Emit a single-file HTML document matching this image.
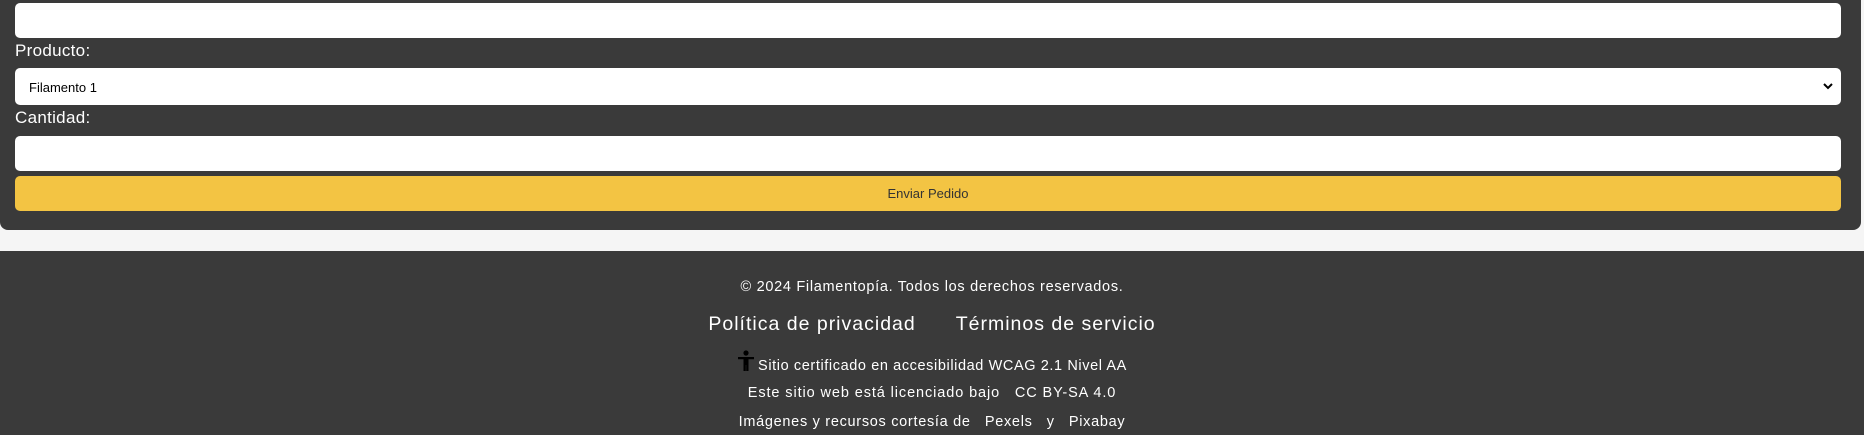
<!DOCTYPE html>
<html><head><meta charset="utf-8"><style>
*{box-sizing:border-box;margin:0;padding:0}
body{width:1864px;height:435px;background:#f5f5f5;font-family:"Liberation Sans",sans-serif;overflow:hidden;position:relative}
.panel{position:absolute;left:0;top:-20px;width:1861px;height:250px;background:#3a3a3a;border-radius:0 0 8px 8px}
.f{position:absolute;left:15px;width:1826px;background:#fff;border-radius:5px}
.lbl{position:absolute;left:15px;color:#fff;font-size:17px;letter-spacing:0.3px}
.btn{position:absolute;left:15px;width:1826px;top:176px;height:35px;background:#f3c443;border-radius:5px;text-align:center;line-height:35px;font-size:13px;color:#333}
footer{position:absolute;left:0;top:251px;width:1864px;height:184px;background:#3a3a3a;color:#fff;text-align:center}
footer div{position:absolute;left:0;width:100%;letter-spacing:0.7px}
</style></head><body>
<div class="panel"></div>
<div class="f" style="top:3px;height:35px"></div>
<div class="lbl" style="top:41px">Producto:</div>
<div class="f" style="top:68px;height:37px;font-size:13px;color:#000;padding:12px 0 0 14px">Filamento 1
<svg style="position:absolute;right:8px;top:15px" width="10" height="7" viewBox="0 0 10 7"><path d="M1 1l4 4 4-4" stroke="#000" stroke-width="2" fill="none"/></svg></div>
<div class="lbl" style="top:108px">Cantidad:</div>
<div class="f" style="top:136px;height:35px"></div>
<div class="btn">Enviar Pedido</div>
<footer>
<div style="top:28px;font-size:14.5px">© 2024 Filamentopía. Todos los derechos reservados.</div>
<div style="top:62px;font-size:19.5px;letter-spacing:1px"><span>Política de privacidad</span><span style="margin-left:40px">Términos de servicio</span></div>
<div style="top:99px;font-size:14.5px;letter-spacing:0.6px"><svg width="18" height="22" viewBox="0 0 18 22" style="vertical-align:-2px;margin-right:3px"><circle cx="9" cy="3" r="2.6" fill="#000"/><path d="M1 7h16v2.2h-5.5V21h-2.3v-6h-0.4v6H6.5V9.2H1z" fill="#000"/></svg>Sitio certificado en accesibilidad WCAG 2.1 Nivel AA</div>
<div style="top:134px;font-size:14.5px;letter-spacing:0.9px">Este sitio web está licenciado bajo &nbsp;&nbsp;CC BY-SA 4.0</div>
<div style="top:163px;font-size:14.5px">Imágenes y recursos cortesía de &nbsp;&nbsp;Pexels &nbsp;&nbsp;y &nbsp;&nbsp;Pixabay</div>
</footer>
</body></html>
